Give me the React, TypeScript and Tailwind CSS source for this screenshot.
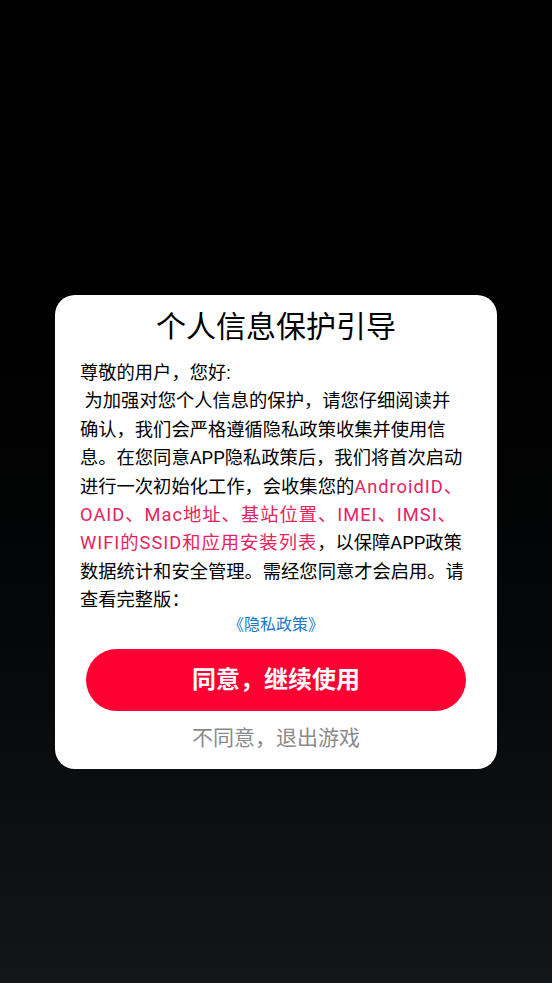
import React from "react"

export default function App() {
  return (
    <div className="min-h-[983px] w-full bg-gradient-to-b from-black to-[#131619] font-['Roboto','Noto_Sans_CJK_SC',sans-serif]">
      <div className="pt-[295px] flex justify-center">
        {/* --- Privacy Dialog --- */}
        <div className="w-[442px] bg-white rounded-[20px] pt-[12px] pb-[16px] pl-[25px] pr-[31px]">
          <h1 className="text-center text-[30px] leading-[40px] text-black ml-[6px]">个人信息保护引导</h1>

          <p className="mt-[12px] text-[18.3px] leading-[28.4px] text-black">
            尊敬的用户，您好:
            <br />
            &nbsp;为加强对您个人信息的保护，请您仔细阅读并确认，我们会严格遵循隐私政策收集并使用信息。在您同意APP隐私政策后，我们将首次启动进行一次初始化工作，会收集您的
            <span className="text-[#e5235d] tracking-[1px]">AndroidID、OAID、Mac地址、基站位置、IMEI、IMSI、WIFI的SSID和应用安装列表</span>
            ，以保障APP政策数据统计和安全管理。需经您同意才会启用。请查看完整版：
          </p>

          <div className="text-center mt-[-2px] ml-[6px]">
            <a href="#" className="text-[16px] leading-[24px] text-[#1a78c8]">《隐私政策》</a>
          </div>

          <button className="mt-[12px] ml-[6px] w-[380px] h-[62px] rounded-full bg-[#ff0033] text-white text-[24px] font-bold">
            同意，继续使用
          </button>

          <div className="mt-[12px] ml-[6px] text-center text-[21px] leading-[30px] text-[#8a8a8a]">不同意，退出游戏</div>
        </div>
      </div>
    </div>
  )
}
